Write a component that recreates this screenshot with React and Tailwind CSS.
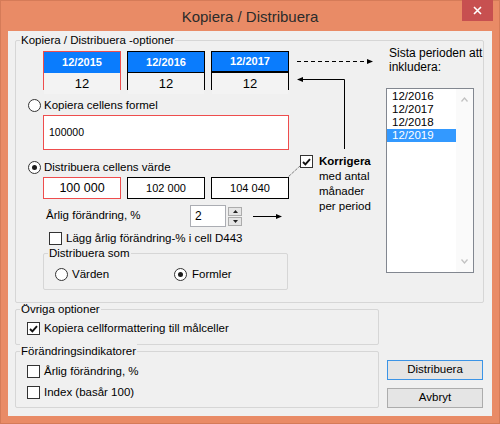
import React from 'react';

function Radio({ checked }) {
  return (
    <span className="flex h-[13px] w-[13px] shrink-0 items-center justify-center rounded-full border border-[#333] bg-white">
      {checked && <span className="h-[5px] w-[5px] rounded-full bg-[#1c1c1c]" />}
    </span>
  );
}

function Check({ checked }) {
  return (
    <span className="flex h-[13px] w-[13px] shrink-0 items-center justify-center border border-[#333] bg-white">
      {checked && (
        <svg width="9" height="8" viewBox="0 0 9 8">
          <path d="M1 4 L3.4 6.4 L8 1.2" fill="none" stroke="#111" strokeWidth="1.9" />
        </svg>
      )}
    </span>
  );
}

function Group({ label, className, children }) {
  return (
    <div className={`rounded-[2px] border border-[#d6d6d6] ${className}`}>
      <span className="-mt-[8px] ml-[4px] block w-fit bg-[#F0F0F0] px-[1px] leading-[14px]">{label}</span>
      {children}
    </div>
  );
}

function DateBox({ label, value, red, thick }) {
  return (
    <div className={`flex h-[39px] w-[78px] flex-col border ${red ? 'border-[#ee4d4d]' : 'border-black'}`}>
      <div
        className={`flex h-[21px] shrink-0 items-center justify-center bg-[#0a7cfd] text-[11px] font-bold text-white ${
          red ? '' : thick ? 'border-b-2 border-black' : 'border-b border-black'
        }`}
      >
        {label}
      </div>
      <div className="flex flex-1 items-center justify-center bg-[#f3f3f3] pt-[1px] text-[13px]">{value}</div>
    </div>
  );
}

function ValueBox({ value, red }) {
  return (
    <div
      className={`flex h-[22px] w-[78px] items-center justify-center border bg-white ${
        red ? 'border-[#ee4d4d] text-[12.5px]' : 'border-black text-[11px]'
      }`}
    >
      {value}
    </div>
  );
}

export default function App() {
  return (
    <div className="h-[424px] w-[500px] border border-[#d57b58] bg-[#e98b66] font-['Liberation_Sans',Arial,sans-serif] text-[11.5px] text-black">
      {/* Title bar */}
      <div className="relative flex h-[30px] items-center justify-center">
        <span className="mt-[2px] text-[15px] text-[#2b2b2b]">Kopiera / Distribuera</span>
        <button className="absolute right-[6px] top-[-1px] flex h-[21px] w-[31px] items-center justify-center bg-[#c75050]">
          <svg width="9" height="9" viewBox="0 0 9 9">
            <path d="M1 1 L8 8 M8 1 L1 8" stroke="white" strokeWidth="1.6" />
          </svg>
        </button>
      </div>

      {/* Client area */}
      <div className="ml-[7px] h-[385px] w-[484px] bg-[#F0F0F0] pt-[9px]">
        <Group label="Kopiera / Distribuera -optioner" className="relative ml-[7px] h-[263px] w-[469px]">
          <div className="flex">
            {/* Left column */}
            <div className="w-[273px] shrink-0">
              <div className="ml-[27px] mt-[4px] flex gap-[6px]">
                <DateBox label="12/2015" value="12" red />
                <DateBox label="12/2016" value="12" />
                <DateBox label="12/2017" value="12" thick />
              </div>

              <div className="ml-[12px] mt-[9px] flex h-[13px] items-center gap-[3px]">
                <Radio />
                <span>Kopiera cellens formel</span>
              </div>
              <div className="ml-[27px] mt-[3px] flex h-[35px] w-[246px] items-center border border-[#ee4d4d] bg-white pl-[5px] text-[10.5px]">
                100000
              </div>

              <div className="ml-[12px] mt-[11px] flex h-[13px] items-center gap-[3px]">
                <Radio checked />
                <span>Distribuera cellens värde</span>
              </div>
              <div className="ml-[27px] mt-[3px] flex gap-[6px]">
                <ValueBox value="100 000" red />
                <ValueBox value="102 000" />
                <ValueBox value="104 040" />
              </div>

              <div className="ml-[30px] mt-[6px] flex h-[22px] items-center">
                <span className="w-[144px]">Årlig förändring, %</span>
                <div className="flex h-[22px] w-[36px] items-center border border-[#abadb3] bg-white pl-[4px] text-[12px]">2</div>
                <div className="ml-[2px] flex flex-col gap-[1px]">
                  <span className="flex h-[9px] w-[14px] items-center justify-center border border-[#acacac] bg-[#e5e5e5]">
                    <svg width="5" height="3" viewBox="0 0 5 3"><path d="M0 3 L2.5 0 L5 3Z" fill="#222" /></svg>
                  </span>
                  <span className="flex h-[9px] w-[14px] items-center justify-center border border-[#acacac] bg-[#e5e5e5]">
                    <svg width="5" height="3" viewBox="0 0 5 3"><path d="M0 0 L2.5 3 L5 0Z" fill="#222" /></svg>
                  </span>
                </div>
                <svg className="ml-[11px]" width="30" height="7" viewBox="0 0 30 7">
                  <path d="M0 3.5 H25" stroke="black" strokeWidth="1" />
                  <path d="M23 1 L29 3.5 L23 6Z" fill="black" />
                </svg>
              </div>

              <div className="ml-[33px] mt-[5px] flex h-[13px] items-center gap-[4px]">
                <Check />
                <span>Lägg årlig förändring-% i cell D443</span>
              </div>

              <Group label="Distribuera som" className="ml-[27px] mt-[8px] h-[37px] w-[245px]">
                <div className="ml-[11px] mt-[8px] flex h-[13px] items-center">
                  <div className="flex w-[119px] items-center gap-[4px]">
                    <Radio />
                    <span>Värden</span>
                  </div>
                  <div className="flex items-center gap-[5px]">
                    <Radio checked />
                    <span>Formler</span>
                  </div>
                </div>
              </Group>
            </div>

            {/* Middle column */}
            <div className="w-[97px] shrink-0 pl-[11px]">
              <div className="mt-[107px] flex items-start gap-[6px]">
                <span className="mt-[1px]">
                  <Check checked />
                </span>
                <div className="leading-[15px]">
                  <div className="font-bold">Korrigera</div>
                  <div>med antal</div>
                  <div>månader</div>
                  <div>per period</div>
                </div>
              </div>
            </div>

            {/* Right column */}
            <div className="flex-1">
              <div className="-mt-[1px] pl-[3px] text-[12px] leading-[14px]">
                Sista perioden att
                <br />
                inkludera:
              </div>
              <div className="mt-[14px] flex h-[185px] w-[88px] border border-[#828790] bg-white">
                <div className="w-[69px] pt-[1px] text-[11.5px] leading-[13px]">
                  <div className="pl-[5px]">12/2016</div>
                  <div className="pl-[5px]">12/2017</div>
                  <div className="pl-[5px]">12/2018</div>
                  <div className="bg-[#3399ff] pl-[5px] text-white">12/2019</div>
                </div>
                <div className="flex flex-1 flex-col items-center justify-between bg-[#fafafa] py-[8px]">
                  <svg width="7" height="5" viewBox="0 0 7 5"><path d="M0.5 4.5 L3.5 1 L6.5 4.5" fill="none" stroke="#c2c2c2" strokeWidth="1.3" /></svg>
                  <svg width="7" height="5" viewBox="0 0 7 5"><path d="M0.5 0.5 L3.5 4 L6.5 0.5" fill="none" stroke="#c2c2c2" strokeWidth="1.3" /></svg>
                </div>
              </div>
            </div>
          </div>

          {/* connector arrows */}
          <svg className="pointer-events-none absolute left-0 top-0" width="467" height="261" viewBox="0 0 467 261">
            <path d="M281 20.5 H351" stroke="black" strokeWidth="1" strokeDasharray="4 3" />
            <path d="M351 18 L357 20.5 L351 23Z" fill="black" />
            <path d="M286 38.5 H328.5 V108" fill="none" stroke="black" strokeWidth="1" />
            <path d="M287 36 L281 38.5 L287 41Z" fill="black" />
            <path d="M284 125 L271 137" stroke="#444" strokeWidth="1" strokeDasharray="1 1" />
          </svg>
        </Group>

        {/* Lower section */}
        <div className="ml-[7px] mt-[6px] flex items-end">
          <div className="w-[364px] shrink-0">
            <Group label="Övriga optioner" className="h-[36px]">
              <div className="ml-[11px] mt-[6px] flex h-[13px] items-center gap-[4px]">
                <Check checked />
                <span>Kopiera cellformattering till målceller</span>
              </div>
            </Group>
            <Group label="Förändringsindikatorer" className="mt-[6px] h-[57px]">
              <div className="ml-[11px] mt-[7px] flex h-[13px] items-center gap-[4px]">
                <Check />
                <span>Årlig förändring, %</span>
              </div>
              <div className="ml-[11px] mt-[8px] flex h-[13px] items-center gap-[4px]">
                <Check />
                <span>Index (basår 100)</span>
              </div>
            </Group>
          </div>
          <div className="ml-[8px] flex flex-col gap-[8px]">
            <button className="flex h-[20px] w-[96px] items-center justify-center border border-[#3c94e6] bg-[#e5e5e5] text-[11.5px]">
              Distribuera
            </button>
            <button className="flex h-[20px] w-[96px] items-center justify-center border border-[#acacac] bg-[#e5e5e5] text-[11.5px]">
              Avbryt
            </button>
          </div>
        </div>
      </div>
    </div>
  );
}
